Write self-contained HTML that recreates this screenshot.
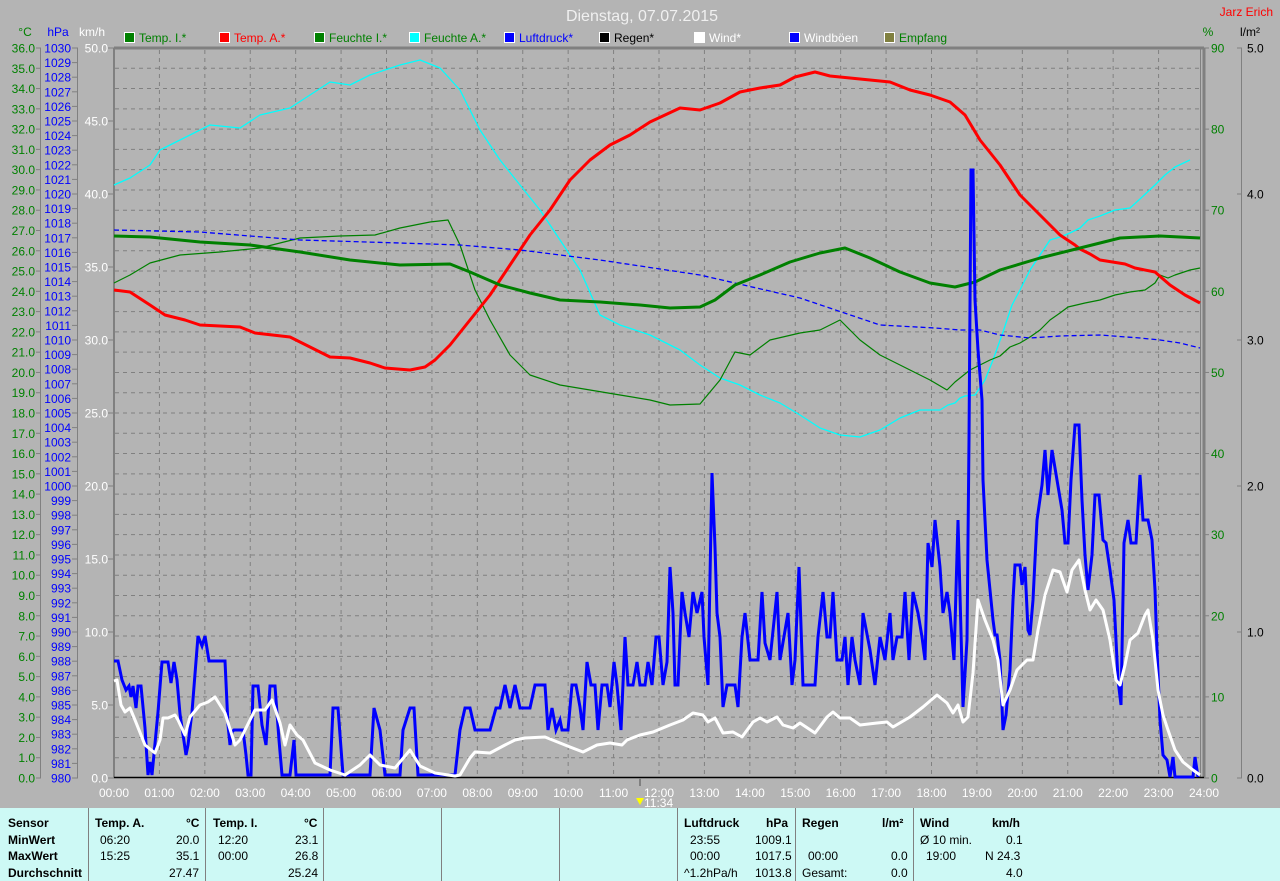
<!DOCTYPE html>
<html><head><meta charset="utf-8"><style>
body{margin:0;background:#b4b4b4;width:1280px;height:881px;overflow:hidden;font-family:"Liberation Sans",sans-serif}
svg{position:absolute;left:0;top:0}
.pn{position:absolute;left:0;top:808px;width:1280px;height:73px;background:#cdf9f5}
.pn div{position:absolute;font-size:12px;color:#000;white-space:nowrap}
.b{font-weight:bold}
.v{position:absolute;top:808px;width:1px;height:73px;background:#808080}
</style></head><body>
<svg width="1280" height="808" viewBox="0 0 1280 808" font-family="Liberation Sans, sans-serif" font-size="12">
<text x="642" y="21" text-anchor="middle" font-size="16" fill="#f0f0f0">Dienstag, 07.07.2015</text>
<text x="1273" y="16" text-anchor="end" fill="#ff0000">Jarz Erich</text>
<g stroke="#fff" stroke-width="1">
<rect x="124.5" y="32.5" width="10" height="10" fill="#008000"/>
<rect x="219.5" y="32.5" width="10" height="10" fill="#ff0000"/>
<rect x="314.5" y="32.5" width="10" height="10" fill="#008000"/>
<rect x="409.5" y="32.5" width="10" height="10" fill="#00ffff"/>
<rect x="504.5" y="32.5" width="10" height="10" fill="#0000ff"/>
<rect x="599.5" y="32.5" width="10" height="10" fill="#000"/>
<rect x="694.5" y="32.5" width="10" height="10" fill="#fff"/>
<rect x="789.5" y="32.5" width="10" height="10" fill="#0000ff"/>
<rect x="884.5" y="32.5" width="10" height="10" fill="#808040"/>
</g>
<g font-size="12">
<text x="139" y="42" fill="#008000">Temp. I.*</text>
<text x="234" y="42" fill="#ff0000">Temp. A.*</text>
<text x="329" y="42" fill="#008000">Feuchte I.*</text>
<text x="424" y="42" fill="#008000">Feuchte A.*</text>
<text x="519" y="42" fill="#0000ff">Luftdruck*</text>
<text x="614" y="42" fill="#000">Regen*</text>
<text x="709" y="42" fill="#fff">Wind*</text>
<text x="804" y="42" fill="#fff">Windböen</text>
<text x="899" y="42" fill="#008000">Empfang</text>
</g>
<text x="25" y="36" text-anchor="middle" fill="#008000">°C</text>
<text x="58" y="36" text-anchor="middle" fill="#0000ff">hPa</text>
<text x="92" y="36" text-anchor="middle" fill="#fff">km/h</text>
<text x="1208" y="36" text-anchor="middle" fill="#008000">%</text>
<text x="1250" y="36" text-anchor="middle" fill="#000">l/m²</text>
<g id="grid" stroke="#808080" stroke-width="1" stroke-dasharray="4,4" fill="none"></g>
<g id="axes"></g>
<line x1="114" y1="48" x2="1204" y2="48" stroke="#808080" stroke-width="3"/>
<line x1="114" y1="48" x2="114" y2="778" stroke="#808080" stroke-width="2"/>
<line x1="1200.5" y1="48" x2="1200.5" y2="778" stroke="#808080" stroke-width="1"/>
<line x1="1204" y1="48" x2="1204" y2="778" stroke="#808080" stroke-width="3"/>
<line x1="114" y1="777.5" x2="1204" y2="777.5" stroke="#000" stroke-width="1.5"/>
<g fill="none" stroke-linejoin="round">
<polyline stroke="#00ffff" stroke-width="1.3" points="114,185 130,178 150,165 160,150 180,140 210,125 240,128 260,115 290,108 310,95 330,82 350,85 370,75 400,65 420,60 440,68 460,90 480,130 500,160 520,185 540,210 560,240 580,270 600,315 620,325 650,335 680,350 700,365 720,378 740,385 760,395 780,403 800,415 820,428 840,435 860,437 880,430 900,418 920,410 940,410 948,405 955,403 960,398 965,396 975,395 985,380 993,360 1003,332 1012,305 1020,290 1030,270 1040,255 1050,240 1060,237 1070,233 1080,228 1088,220 1100,216 1115,210 1130,208 1140,199 1155,185 1165,175 1175,167 1190,160"/>
<polyline stroke="#008000" stroke-width="1.2" points="114,283 130,275 150,263 180,255 220,252 260,248 300,238 340,236 375,235 400,228 430,222 448,220 460,245 475,290 490,320 510,355 530,375 560,385 590,390 620,395 650,400 670,405 700,404 720,380 735,352 750,355 770,340 800,333 820,330 840,320 860,340 880,355 910,370 930,380 947,390 955,382 970,370 980,365 990,360 1000,356 1010,347 1020,343 1030,337 1040,330 1050,320 1060,313 1068,307 1085,303 1100,300 1115,295 1130,292 1145,290 1155,283 1160,275 1168,278 1175,275 1190,270 1200,268"/>
<polyline stroke="#0000ff" stroke-width="1.3" stroke-dasharray="5,3" points="114,230 200,232 300,240 400,243 460,245 520,250 600,260 700,275 800,298 880,325 935,328 960,330 980,330 1000,335 1030,338 1060,336 1100,335 1140,338 1160,340 1180,343 1200,348"/>
<polyline stroke="#ff0000" stroke-width="3" points="114,290 130,292 150,305 165,315 185,320 200,325 240,327 255,333 290,337 310,347 330,357 350,358 370,363 385,368 410,370 425,367 435,360 450,345 470,320 490,295 510,265 530,235 550,210 570,180 590,160 610,145 630,135 650,122 665,115 680,108 700,110 720,103 740,92 760,88 780,85 795,77 815,72 830,76 850,78 870,80 890,82 910,90 930,95 950,102 965,115 980,140 1000,165 1020,195 1040,215 1060,235 1075,245 1080,249 1090,254 1100,260 1125,264 1135,268 1155,272 1170,285 1185,295 1200,303"/>
<polyline stroke="#008000" stroke-width="3" points="114,236 150,237 200,242 250,245 300,252 350,260 400,265 450,264 470,272 500,285 530,293 560,300 600,302 640,305 670,308 700,307 715,300 735,285 760,275 790,262 820,253 845,248 870,258 900,272 930,283 955,287 975,282 1000,270 1040,258 1080,248 1120,238 1160,236 1200,238"/>
<polyline stroke="#0000ff" stroke-width="3" stroke-linejoin="miter" points="114,661 118,661 122,680 126,690 129,686 131,697 133,686 136,708 138,686 141,686 145,728 148,775 150,762 152,775 158,712 162,662 168,662 171,683 174,662 177,680 180,714 186,755 188,745 192,712 198,636 202,646 205,636 209,661 225,661 228,725 230,745 232,732 234,730 243,730 246,755 248,775 251,775 253,686 258,686 262,725 266,745 270,686 275,686 279,740 282,775 290,775 294,740 296,775 330,775 333,708 338,708 343,775 370,775 374,708 380,730 385,775 400,775 403,730 410,708 414,708 418,775 455,775 460,730 465,708 470,708 475,730 485,730 490,730 496,708 500,708 505,685 510,708 515,685 520,708 530,708 535,685 540,685 545,685 548,730 552,708 556,730 560,720 562,730 568,730 572,685 576,685 580,707 583,730 587,662 591,685 595,685 598,730 602,685 607,685 610,707 614,662 617,685 621,730 625,637 628,685 633,685 637,662 640,685 645,685 648,662 652,685 656,637 659,637 663,685 667,662 670,567 673,613 675,685 678,685 682,592 685,613 689,637 693,592 697,613 702,592 704,637 708,685 710,577 712,473 715,547 717,613 720,637 723,707 727,685 735,685 738,707 742,637 745,613 750,660 758,660 762,592 765,643 770,660 777,592 780,660 788,613 792,685 795,660 799,567 803,685 815,685 818,637 823,592 827,637 830,637 833,592 837,660 842,660 845,637 848,685 852,637 855,660 860,685 863,613 870,650 875,685 880,637 885,660 890,613 893,660 897,637 902,637 905,592 909,660 913,592 918,613 922,637 925,660 928,543 932,567 935,520 940,567 943,613 947,592 950,613 954,660 958,520 963,707 967,640 969,440 971,170 973,170 975,300 978,350 982,400 983,480 987,560 990,590 993,620 995,635 997,635 1000,660 1003,730 1006,715 1010,670 1013,600 1015,565 1020,565 1022,585 1025,567 1028,630 1030,635 1033,600 1037,520 1042,485 1045,450 1048,495 1052,450 1057,480 1062,510 1065,543 1068,543 1071,480 1075,425 1079,425 1082,500 1085,555 1088,590 1092,555 1095,495 1099,495 1103,540 1106,543 1110,570 1114,600 1118,680 1121,705 1124,543 1128,520 1131,543 1136,543 1140,475 1143,520 1148,520 1152,540 1155,590 1157,650 1160,720 1163,755 1167,760 1170,777 1173,757 1175,777 1193,777 1195,757 1198,777"/>
<polyline stroke="#fff" stroke-width="3" points="114,681 117,680 121,705 125,712 130,708 135,720 145,745 155,753 160,740 163,718 168,718 175,715 178,720 185,735 190,717 200,705 208,702 215,697 225,713 235,745 240,740 250,720 255,710 265,710 272,700 280,723 285,745 290,725 297,735 303,740 315,763 330,770 345,775 360,765 370,755 380,765 395,768 410,750 420,766 435,773 455,776 460,775 470,758 475,752 490,753 505,745 515,740 525,738 545,737 560,743 570,747 583,752 597,745 610,743 622,745 627,740 640,735 653,732 670,725 683,720 693,713 703,715 708,722 715,718 723,733 733,732 742,737 753,722 760,718 767,722 777,717 783,725 793,728 800,723 815,733 827,717 833,712 840,718 850,718 860,725 877,723 887,722 893,727 910,717 923,707 937,695 947,703 953,713 958,705 963,722 968,717 973,673 978,600 985,620 993,640 998,660 1003,705 1010,690 1017,670 1022,665 1027,660 1033,660 1038,630 1045,595 1053,570 1060,572 1067,592 1072,570 1079,560 1085,590 1090,610 1096,600 1103,610 1110,640 1116,680 1120,685 1125,665 1130,640 1138,633 1145,615 1148,610 1153,640 1158,690 1163,715 1168,730 1175,750 1183,762 1193,770 1200,775"/>
</g>
<line x1="640" y1="778" x2="640" y2="786" stroke="#808080" stroke-width="2"/>
<path d="M636 798 L644 798 L640 805 Z" fill="#ffff00"/>
<text x="644" y="807" fill="#fff" font-size="12">11:34</text>
</svg>
<div class="pn">
<div class="b" style="left:8px;top:8px">Sensor</div>
<div class="b" style="left:8px;top:25px">MinWert</div>
<div class="b" style="left:8px;top:41px">MaxWert</div>
<div class="b" style="left:8px;top:58px">Durchschnitt</div>
<div class="b" style="left:95px;top:8px">Temp. A.</div><div class="b" style="left:186px;top:8px">°C</div>
<div style="left:100px;top:25px">06:20</div><div style="left:176px;top:25px">20.0</div>
<div style="left:100px;top:41px">15:25</div><div style="left:176px;top:41px">35.1</div>
<div style="left:169px;top:58px">27.47</div>
<div class="b" style="left:213px;top:8px">Temp. I.</div><div class="b" style="left:304px;top:8px">°C</div>
<div style="left:218px;top:25px">12:20</div><div style="left:295px;top:25px">23.1</div>
<div style="left:218px;top:41px">00:00</div><div style="left:295px;top:41px">26.8</div>
<div style="left:288px;top:58px">25.24</div>
<div class="b" style="left:684px;top:8px">Luftdruck</div><div class="b" style="left:766px;top:8px">hPa</div>
<div style="left:690px;top:25px">23:55</div><div style="left:755px;top:25px">1009.1</div>
<div style="left:690px;top:41px">00:00</div><div style="left:755px;top:41px">1017.5</div>
<div style="left:684px;top:58px">^1.2hPa/h</div><div style="left:755px;top:58px">1013.8</div>
<div class="b" style="left:802px;top:8px">Regen</div><div class="b" style="left:882px;top:8px">l/m²</div>
<div style="left:808px;top:41px">00:00</div><div style="left:891px;top:41px">0.0</div>
<div style="left:802px;top:58px">Gesamt:</div><div style="left:891px;top:58px">0.0</div>
<div class="b" style="left:920px;top:8px">Wind</div><div class="b" style="left:992px;top:8px">km/h</div>
<div style="left:920px;top:25px">Ø 10 min.</div><div style="left:1006px;top:25px">0.1</div>
<div style="left:926px;top:41px">19:00</div><div style="left:985px;top:41px">N 24.3</div>
<div style="left:1006px;top:58px">4.0</div>
</div>
<div class="v" style="left:88px"></div><div class="v" style="left:205px"></div><div class="v" style="left:323px"></div><div class="v" style="left:441px"></div><div class="v" style="left:559px"></div><div class="v" style="left:677px"></div><div class="v" style="left:795px"></div><div class="v" style="left:913px"></div>
<script>
var ns="http://www.w3.org/2000/svg";
function el(p,t,a,txt){var e=document.createElementNS(ns,t);for(var k in a)e.setAttribute(k,a[k]);if(txt!=null)e.textContent=txt;p.appendChild(e);return e;}
var g=document.getElementById("grid"),ax=document.getElementById("axes");
for(var h=1;h<24;h++){var x=114+h*1090/24;el(g,"line",{x1:x,y1:50,x2:x,y2:777});}
for(var i=1;i<36;i++){var y=48+i*730/36;el(g,"line",{x1:115,y1:y,x2:1199,y2:y});}
for(var h=0;h<=24;h++){var x=114+h*1090/24;el(ax,"text",{x:x,y:797,"text-anchor":"middle",fill:"#fff"},(h<10?"0":"")+h+":00");}
// °C axis
el(ax,"line",{x1:40.5,y1:48,x2:40.5,y2:778,stroke:"#808080"});
for(var i=0;i<=36;i++){var y=48+i*730/36;el(ax,"line",{x1:36,y1:y,x2:41,y2:y,stroke:"#808080"});el(ax,"text",{x:35,y:y+4.5,"text-anchor":"end",fill:"#008000"},(36-i).toFixed(1));}
el(ax,"line",{x1:77.5,y1:48,x2:77.5,y2:778,stroke:"#808080"});
for(var i=0;i<=50;i++){var y=48+i*14.6;el(ax,"line",{x1:72,y1:y,x2:78,y2:y,stroke:"#808080"});el(ax,"text",{x:71,y:y+4.5,"text-anchor":"end",fill:"#0000ff"},1030-i);}
for(var i=0;i<=10;i++){var y=48+i*73;el(ax,"line",{x1:108,y1:y,x2:114,y2:y,stroke:"#808080"});el(ax,"text",{x:108,y:y+4.5,"text-anchor":"end",fill:"#fff"},(50-i*5).toFixed(1));}
for(var i=0;i<=9;i++){var y=48+i*730/9;el(ax,"line",{x1:1204,y1:y,x2:1209,y2:y,stroke:"#808080"});el(ax,"text",{x:1211,y:y+4.5,fill:"#008000"},90-i*10);}
el(ax,"line",{x1:1241.5,y1:48,x2:1241.5,y2:778,stroke:"#808080"});
for(var i=0;i<=5;i++){var y=48+i*146;el(ax,"line",{x1:1237,y1:y,x2:1242,y2:y,stroke:"#808080"});el(ax,"text",{x:1247,y:y+4.5,fill:"#000"},(5-i).toFixed(1));}
</script>
</body></html>
